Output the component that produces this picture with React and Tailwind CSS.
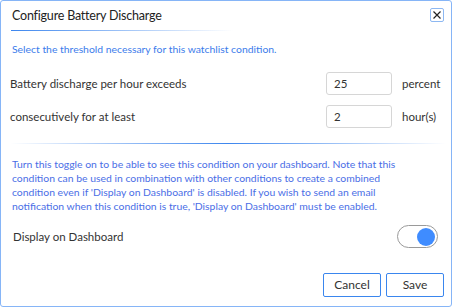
import React from "react";

function Field({ label, value, unit }) {
  return (
    <div className="flex items-center h-[23px] text-[11.5px] text-[#333]">
      <span className="flex-1">{label}</span>
      <div className="w-[66px] h-[23px] border border-[#d6d6d6] rounded-[3px] pl-[7px] flex items-center">
        {value}
      </div>
      <span className="w-[59px] pl-[10px]">{unit}</span>
    </div>
  );
}

export default function App() {
  return (
    <div className="w-[452px] h-[307px] bg-white" style={{ fontFamily: "Lato, 'Open Sans', sans-serif" }}>
      <div className="w-full h-full border border-[#86b5f7] rounded-[3px] flex flex-col">
        <div className="flex items-start justify-between pl-[10px] pr-[7px] pt-[7px]">
          <div>
            <h1 className="pl-px text-[12.5px] tracking-[-0.2px] text-[#222] leading-[16px]">
              Configure Battery Discharge
            </h1>
            <div className="mt-[6px] w-[222px] h-px bg-gradient-to-r from-[#3d86ee] to-transparent" />
          </div>
          <button className="w-[14px] h-[14px] border border-[#8db8f2] rounded-[2px] flex items-center justify-center">
            <svg width="8" height="8" viewBox="0 0 8 8">
              <path d="M0.5 0.5L7.5 7.5M7.5 0.5L0.5 7.5" stroke="#222" strokeWidth="1.2" />
            </svg>
          </button>
        </div>

        <p className="mt-[11px] px-[11px] text-[10.4px] leading-[14px] text-[#3c7ceb]">
          Select the threshold necessary for this watchlist condition.
        </p>

        <div className="mt-[16px] pl-[9px] flex flex-col gap-[10px]">
          <Field label="Battery discharge per hour exceeds" value="25" unit="percent" />
          <Field label="consecutively for at least" value="2" unit="hour(s)" />
        </div>

        <div className="mt-[15px] ml-[9px] mr-[5px] h-px bg-gradient-to-r from-transparent via-[#3d86ee] to-transparent" />

        <p className="mt-[13px] pl-[11px] text-[10.4px] leading-[14px] text-[#4a6ee6] whitespace-nowrap">
          Turn this toggle on to be able to see this condition on your dashboard. Note that this
          <br />
          condition can be used in combination with other conditions to create a combined
          <br />
          condition even if 'Display on Dashboard' is disabled. If you wish to send an email
          <br />
          notification when this condition is true, 'Display on Dashboard' must be enabled.
        </p>

        <div className="mt-[12px] pl-[12px] pr-[13px] flex items-center justify-between">
          <span className="text-[11.5px] text-[#333]">Display on Dashboard</span>
          <div className="w-[41px] h-[23px] rounded-full border border-[#9a9a9a] bg-white flex items-center justify-end pr-[2px]">
            <div className="w-[18px] h-[18px] rounded-full bg-[#3f8cff]" />
          </div>
        </div>

        <div className="mt-auto mb-[9px] pr-[7px] flex justify-end gap-[5px]">
          <button className="w-[58px] h-[24px] border border-[#3a86ee] rounded-[2px] text-[12px] text-[#333]">
            Cancel
          </button>
          <button className="w-[58px] h-[24px] border border-[#3a86ee] rounded-[2px] text-[12px] text-[#333]">
            Save
          </button>
        </div>
      </div>
    </div>
  );
}
